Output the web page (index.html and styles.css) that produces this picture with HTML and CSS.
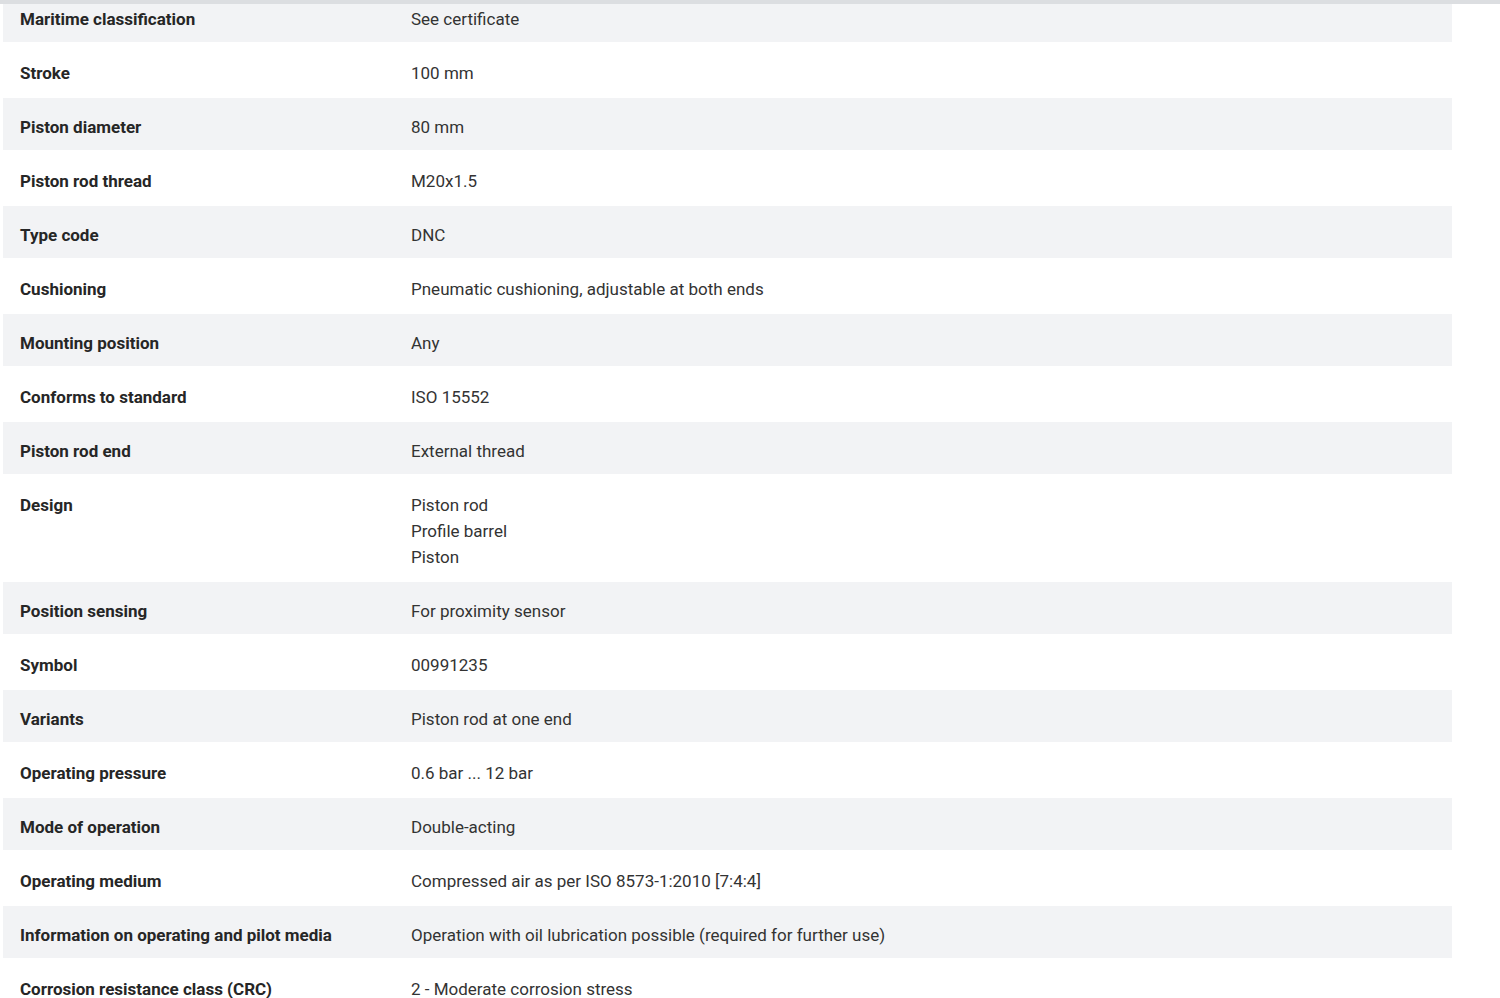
FILE: index.html
```html
<!DOCTYPE html>
<html lang="en">
<head>
    <meta charset="UTF-8">
    <title>Technical data</title>
    <link rel="stylesheet" href="styles.css">
</head>
<body>
    <div class="top-bar"></div>
    <div class="viewport">
        <table class="spec-table">
            <tr><td class="label">Maritime classification</td><td class="value">See certificate</td></tr>
            <tr><td class="label">Stroke</td><td class="value">100 mm</td></tr>
            <tr><td class="label">Piston diameter</td><td class="value">80 mm</td></tr>
            <tr><td class="label">Piston rod thread</td><td class="value">M20x1.5</td></tr>
            <tr><td class="label">Type code</td><td class="value">DNC</td></tr>
            <tr><td class="label">Cushioning</td><td class="value">Pneumatic cushioning, adjustable at both ends</td></tr>
            <tr><td class="label">Mounting position</td><td class="value">Any</td></tr>
            <tr><td class="label">Conforms to standard</td><td class="value">ISO 15552</td></tr>
            <tr><td class="label">Piston rod end</td><td class="value">External thread</td></tr>
            <tr><td class="label">Design</td><td class="value">Piston rod<br>Profile barrel<br>Piston</td></tr>
            <tr><td class="label">Position sensing</td><td class="value">For proximity sensor</td></tr>
            <tr><td class="label">Symbol</td><td class="value">00991235</td></tr>
            <tr><td class="label">Variants</td><td class="value">Piston rod at one end</td></tr>
            <tr><td class="label">Operating pressure</td><td class="value">0.6 bar ... 12 bar</td></tr>
            <tr><td class="label">Mode of operation</td><td class="value">Double-acting</td></tr>
            <tr><td class="label">Operating medium</td><td class="value">Compressed air as per ISO 8573-1:2010 [7:4:4]</td></tr>
            <tr><td class="label">Information on operating and pilot media</td><td class="value">Operation with oil lubrication possible (required for further use)</td></tr>
            <tr><td class="label">Corrosion resistance class (CRC)</td><td class="value">2 - Moderate corrosion stress</td></tr>
        </table>
    </div>
</body>
</html>
```

FILE: styles.css
```css
* {
    margin: 0;
    padding: 0;
    box-sizing: border-box;
}
body {
    font-family: Roboto, "Noto Sans", sans-serif;
    background: #fff;
    color: #333;
    height: 100vh;
    overflow: hidden;
}
.top-bar {
    height: 4px;
    background: #dcdee1;
    position: relative;
    z-index: 2;
}
.viewport {
    height: 994px;
    overflow: hidden;
    padding: 0 48px 0 3px;
}
.spec-table {
    width: 1449px;
    border-collapse: separate;
    border-spacing: 0 2px;
    margin-top: -16px;
}
.spec-table tr:nth-child(odd) td {
    background: #f2f3f5;
}
.spec-table td {
    padding: 16px 17px 10px;
    font-size: 17px;
    line-height: 26px;
    vertical-align: top;
}
.label {
    width: 408px;
    font-weight: bold;
    color: #262626;
}
.value {
    padding-left: 0 !important;
    color: #333;
}
```
